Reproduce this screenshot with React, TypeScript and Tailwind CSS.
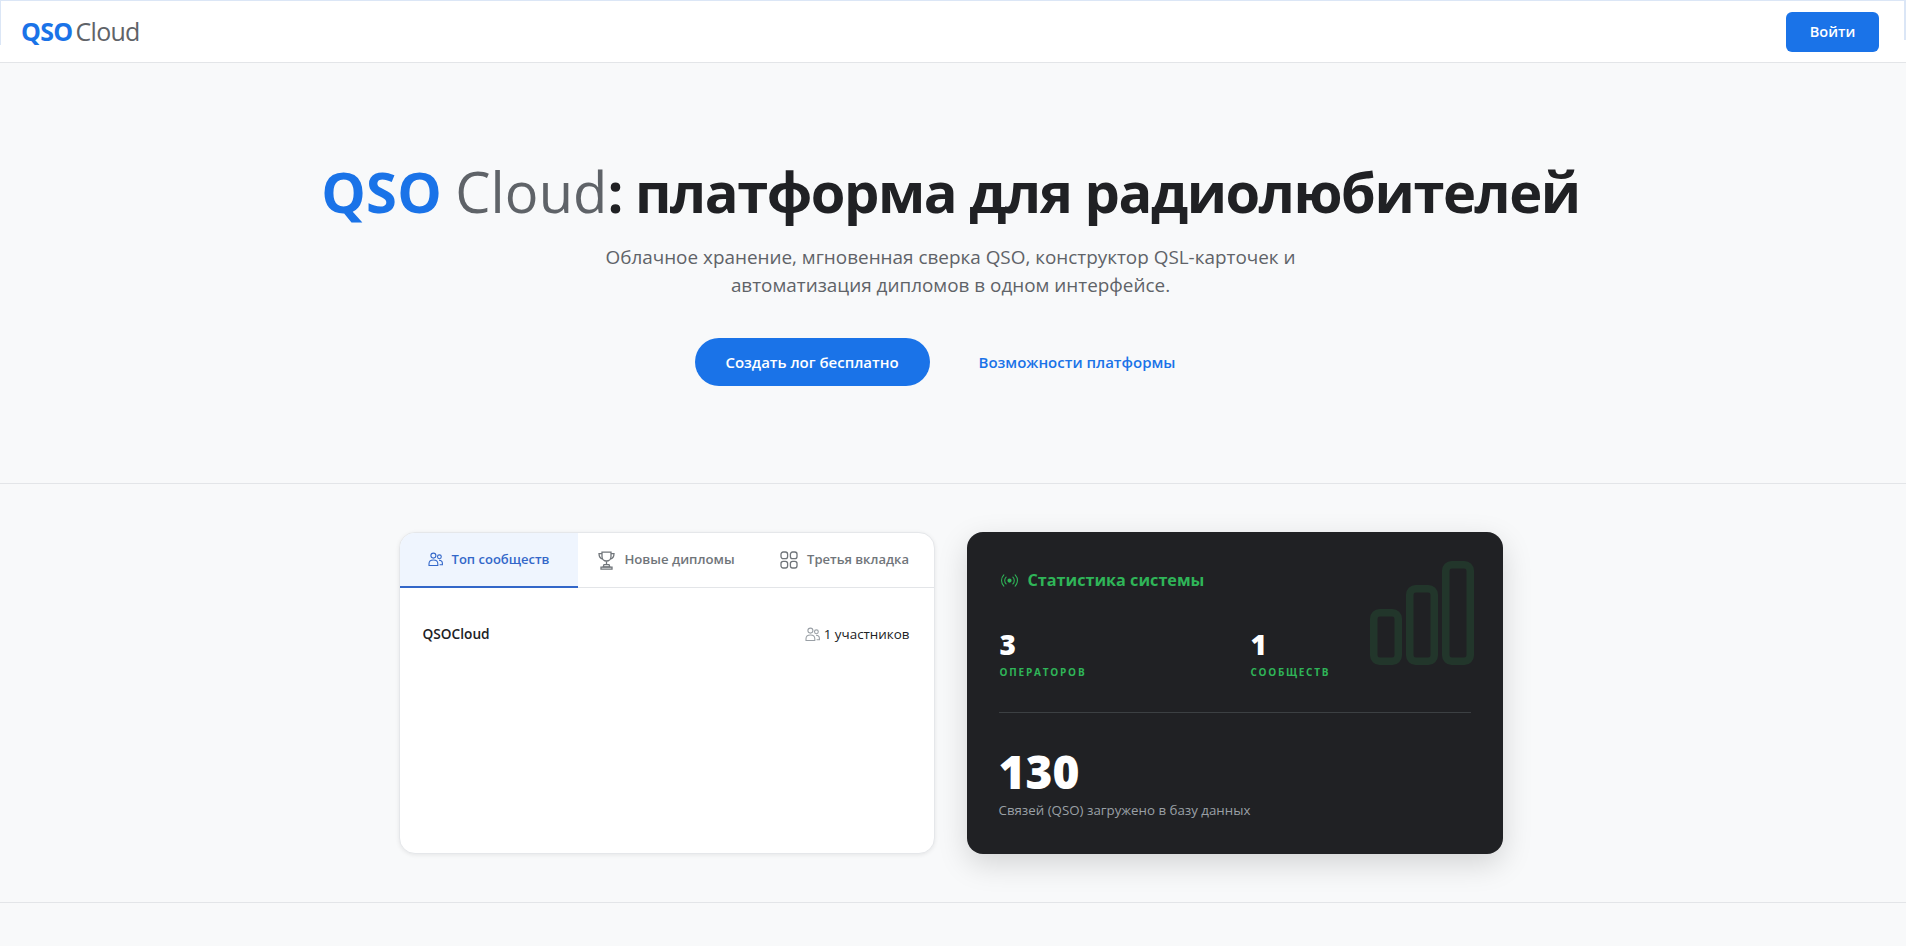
import { BsBroadcast } from "react-icons/bs"

function PeopleIcon({ className }: { className?: string }) {
  return (
    <svg className={className} width="15" height="15" viewBox="0 0 15 15" fill="none" stroke="currentColor" strokeWidth="1.1">
      <circle cx="5.4" cy="3.6" r="2.5" />
      <circle cx="11.4" cy="4.8" r="1.9" />
      <path d="M1 13.5v-1.8C1 9.4 3 8 5.4 8s4.4 1.4 4.4 3.7v1.8z" />
      <path d="M11 8.2c2 0 3.4 1.2 3.4 3.2v1.4h-2.8" />
    </svg>
  )
}

function TrophyIcon() {
  return (
    <svg width="17" height="19" viewBox="0 0 17 19" fill="none" stroke="currentColor" strokeWidth="1.3">
      <path d="M4 1.2h9v4.3a4.5 4.5 0 0 1-9 0z" />
      <path d="M4 2.6H1c0 3 1.2 5 3.8 5.6M13 2.6h3c0 3-1.2 5-3.8 5.6" />
      <path d="M8.5 10.2v3.4" />
      <path d="M6 13.6h5l.8 2.2H5.2z" />
      <path d="M3 16.2h11v2H3z" />
    </svg>
  )
}

function GridIcon() {
  return (
    <svg width="18" height="18" viewBox="0 0 18 18" fill="none" stroke="currentColor" strokeWidth="1.3">
      <rect x="1" y="1" width="6.6" height="6.6" rx="2.2" />
      <rect x="10.4" y="1" width="6.6" height="6.6" rx="2.2" />
      <rect x="1" y="10.4" width="6.6" height="6.6" rx="2.2" />
      <rect x="10.4" y="10.4" width="6.6" height="6.6" rx="2.2" />
    </svg>
  )
}

function BarsIcon() {
  return (
    <svg
      className="absolute right-[29px] top-[29px] text-[#2fae54] opacity-[0.15]"
      width="104"
      height="104"
      viewBox="0 0 104 104"
      fill="none"
      stroke="currentColor"
      strokeWidth="7.5"
    >
      <rect x="3.75" y="51.75" width="24.5" height="48.5" rx="6" />
      <rect x="39.75" y="27.75" width="24.5" height="72.5" rx="6" />
      <rect x="75.75" y="3.75" width="24.5" height="96.5" rx="6" />
    </svg>
  )
}

export default function App() {
  return (
    <div className="relative min-h-screen bg-[#f8f9fa] font-['Open_Sans','Noto_Sans',sans-serif] text-[#202124]">
      <div className="absolute left-0 top-0 h-[45px] w-px bg-[#dbe6f6]" />
      <div className="absolute right-0 top-0 h-[40px] w-[2px] bg-[#dbe6f6]" />
      <header className="flex h-[63px] items-center justify-between border-t border-b border-t-[#dbe6f6] border-b-[#e3e5e8] bg-white pl-[21px] pr-[27px]">
        <div className="text-[25px] tracking-[-0.7px]">
          <span className="font-bold text-[#1a73e8]">QSO</span>
          <span className="ml-[3px] font-medium text-[#5f6368]">Cloud</span>
        </div>
        <button className="h-[40px] w-[93px] rounded-md bg-[#1a73e8] text-[14.5px] font-semibold text-white">Войти</button>
      </header>

      <section className="flex h-[421px] flex-col items-center border-b border-[#e3e5e8] pt-[90px] pr-[5px]">
        <h1 className="text-[56px] leading-[76px] font-bold tracking-[-1.45px]">
          <span className="tracking-[0.3px] text-[#1a73e8]">QSO</span>{" "}
          <span className="font-normal tracking-[0.1px] text-[#5f6368]">Cloud</span>: платформа для радиолюбителей
        </h1>
        <p className="mt-[14px] w-[720px] text-center text-[18.9px] leading-[28px] text-[#5f6368]">
          Облачное хранение, мгновенная сверка QSO, конструктор QSL-карточек и автоматизация дипломов в одном интерфейсе.
        </p>
        <div className="mt-[39px] flex items-center gap-[49px] pr-[31px]">
          <button className="h-[48px] w-[235px] rounded-full bg-[#1a73e8] text-[15px] font-semibold text-white">Создать лог бесплатно</button>
          <a className="text-[15px] font-semibold text-[#1a73e8]">Возможности платформы</a>
        </div>
      </section>

      <section className="flex justify-center border-b border-[#e3e5e8] pt-[48px] pr-[5px] pb-[48px]">
        <div className="grid w-[1104px] grid-cols-2 gap-[32px]">
          <div className="h-[322px] overflow-hidden rounded-2xl border border-[#e5e7ea] bg-white shadow-[0_1px_4px_rgba(0,0,0,0.08)]">
            <div className="flex h-[55px] border-b border-[#e3e5e8] text-[13px] font-semibold">
              <div className="-mb-px flex w-[178px] items-center justify-center gap-[9px] border-b-[2px] border-[#3367c9] bg-[#eff5fe] text-[#3367c9]">
                <PeopleIcon />
                Топ сообществ
              </div>
              <div className="flex flex-1 items-center justify-center gap-[9px] text-[13.2px] text-[#70757a]">
                <TrophyIcon />
                Новые дипломы
              </div>
              <div className="flex flex-1 items-center justify-center gap-[9px] text-[#70757a]">
                <GridIcon />
                Третья вкладка
              </div>
            </div>
            <div className="flex items-center justify-between pl-[23px] pr-[24px] pt-[36px] text-[13.4px] font-medium">
              <span className="text-[13.7px] font-semibold">QSOCloud</span>
              <span className="flex items-center gap-[4px]">
                <PeopleIcon className="text-[#9aa0a6]" />
                1 участников
              </span>
            </div>
          </div>

          <div className="relative h-[322px] rounded-2xl bg-[#202124] px-[32px] pt-[36px] shadow-[0_10px_30px_rgba(0,0,0,0.15)]">
            <BarsIcon />
            <div className="flex items-center gap-[10px] pl-[2px] text-[#2fb558]">
              <BsBroadcast size={17} />
              <span className="text-[16.2px] font-bold">Статистика системы</span>
            </div>
            <div className="mt-[33px] flex pl-[1px]">
              <div className="w-[251px]">
                <div className="text-[28px] leading-[38px] font-extrabold text-white">3</div>
                <div className="mt-[2px] text-[10px] font-bold tracking-[1.8px] text-[#2fb558]">ОПЕРАТОРОВ</div>
              </div>
              <div>
                <div className="text-[28px] leading-[38px] font-extrabold text-white">1</div>
                <div className="mt-[2px] text-[10px] font-bold tracking-[1.7px] text-[#2fb558]">СООБЩЕСТВ</div>
              </div>
            </div>
            <div className="mt-[32px] h-px bg-[#3c4043]" />
            <div className="mt-[28px] text-[46px] leading-[60px] font-extrabold text-white">130</div>
            <div className="text-[13.3px] text-[#9aa0a6]">Связей (QSO) загружено в базу данных</div>
          </div>
        </div>
      </section>
    </div>
  )
}
